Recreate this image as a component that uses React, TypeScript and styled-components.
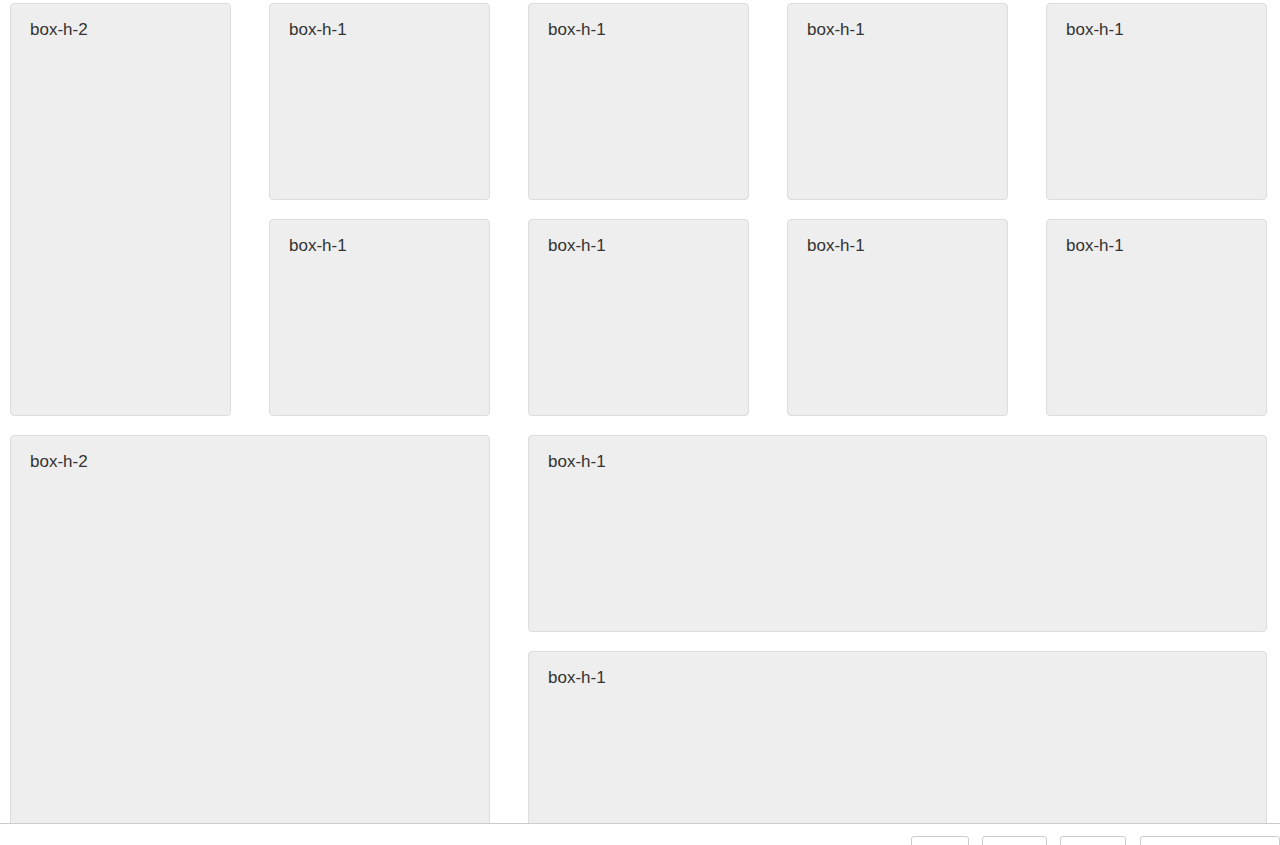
import styled, { createGlobalStyle } from "styled-components";

const GlobalStyle = createGlobalStyle`
  html, body {
    margin: 0;
    padding: 0;
    background: #fff;
    overflow: hidden;
  }
  body {
    font-family: "Liberation Sans", Arial, sans-serif;
    color: #333;
  }
`;

const Grid = styled.div`
  display: grid;
  grid-template-columns: repeat(5, 221px);
  grid-auto-rows: 197px;
  column-gap: 38px;
  row-gap: 19px;
  padding: 3px 0 0 10px;
`;

const Box = styled.div<{ $rows?: number; $cols?: number }>`
  grid-row: span ${(p) => p.$rows ?? 1};
  grid-column: span ${(p) => p.$cols ?? 1};
  background-color: #eee;
  border: 1px solid #ddd;
  border-radius: 4px;
  padding: 13px 19px;
  font-size: 17px;
  line-height: 25px;
`;

const Footer = styled.div`
  position: fixed;
  left: 0;
  right: 0;
  top: 823px;
  height: 60px;
  background: #fff;
  border-top: 1px solid #ccc;
  display: flex;
  justify-content: flex-end;
  align-items: flex-start;
  gap: 13px;
  padding-top: 12px;
`;

const Button = styled.button<{ $w: number }>`
  width: ${(p) => p.$w}px;
  font-family: "Liberation Sans", Arial, sans-serif;
  font-size: 13px;
  color: #333;
  background: #fff;
  border: 1px solid #ccc;
  border-radius: 3px;
  height: 30px;
  padding: 0 10px;
`;

const LastButton = styled(Button)`
  margin-left: 1px;
  text-align: left;
`;

const layout = [
  { label: "box-h-2", rows: 2, cols: 1 },
  { label: "box-h-1" },
  { label: "box-h-1" },
  { label: "box-h-1" },
  { label: "box-h-1" },
  { label: "box-h-1" },
  { label: "box-h-1" },
  { label: "box-h-1" },
  { label: "box-h-1" },
  { label: "box-h-2", rows: 2, cols: 2 },
  { label: "box-h-1", cols: 3 },
  { label: "box-h-1", cols: 3 },
];

function App() {
  return (
    <>
      <GlobalStyle />
      <Grid>
        {layout.map((b, i) => (
          <Box key={i} $rows={b.rows} $cols={b.cols}>
            {b.label}
          </Box>
        ))}
      </Grid>
      <Footer>
        <Button $w={58}>Share</Button>
        <Button $w={65}>Export</Button>
        <Button $w={66}>Embed</Button>
        <LastButton $w={140}>Collections</LastButton>
      </Footer>
    </>
  );
}

export default App;
